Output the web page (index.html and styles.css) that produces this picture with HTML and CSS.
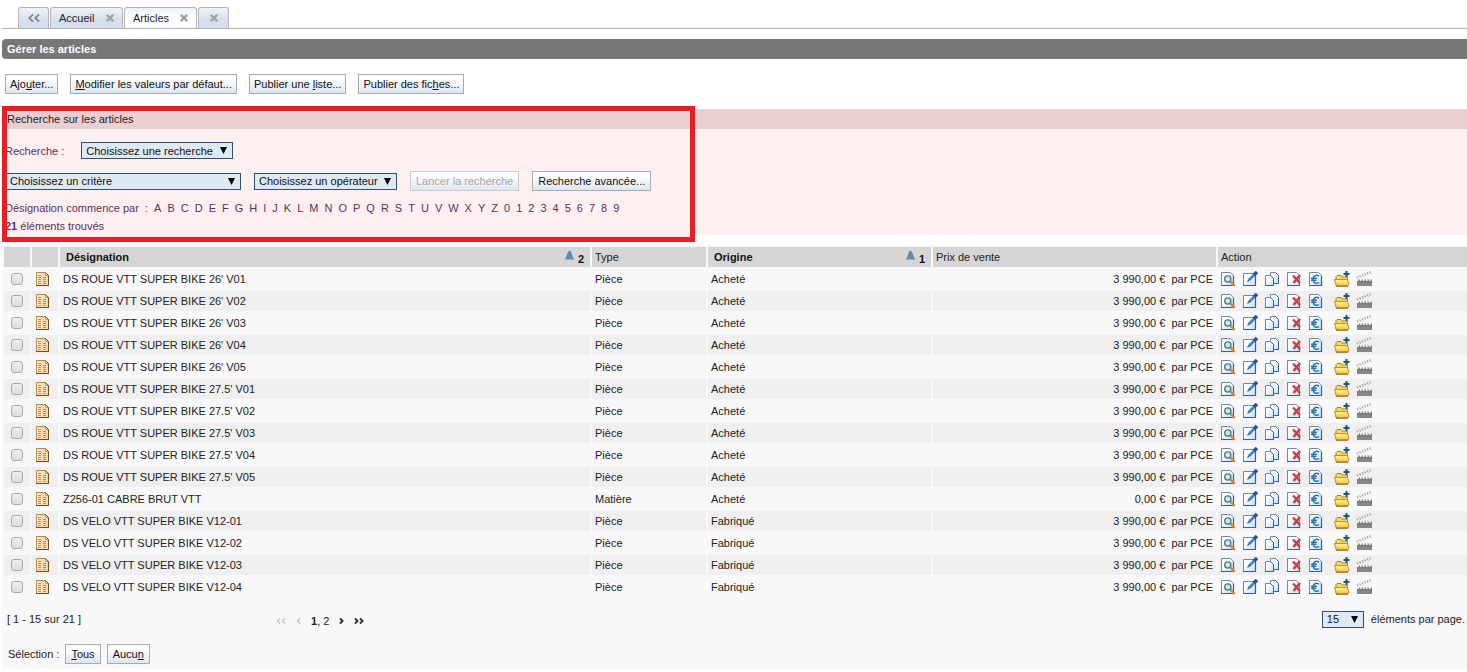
FILE: index.html
```html
<!DOCTYPE html>
<html lang="fr">
<head>
<meta charset="utf-8">
<title>Gérer les articles</title>
<link rel="stylesheet" href="styles.css">
</head>
<body>
<svg class="sprite" aria-hidden="true">
  <defs>
    <linearGradient id="paper" x1="0" y1="0" x2="1" y2="1"><stop offset="0.3" stop-color="#ffffff"/><stop offset="1" stop-color="#bfe0ee"/></linearGradient>
    <linearGradient id="gold" x1="0" y1="0" x2="0" y2="1"><stop offset="0" stop-color="#fff3a0"/><stop offset="1" stop-color="#f0c436"/></linearGradient>
    <linearGradient id="tan" x1="0" y1="0" x2="1" y2="0"><stop offset="0" stop-color="#fdeccb"/><stop offset="1" stop-color="#f3d5a2"/></linearGradient>
  </defs>
  <symbol id="i-close" viewBox="0 0 8 8"><path d="M.8 .8l6.400 6.400M7.200 .8L.8 7.200" stroke="#a2a2a2" stroke-width="2.300"/></symbol>
  <symbol id="i-prev2" viewBox="0 0 12 8"><path d="M5 .5L1.200 4 5 7.500M11 .5L7.200 4l3.800 3.500" fill="none" stroke="currentColor" stroke-width="1.500"/></symbol>
  <symbol id="i-first" viewBox="0 0 10 6"><path d="M4 .4L1.500 3 4 5.600M9 .4L6.500 3 9 5.600" fill="none" stroke="currentColor" stroke-width="1.500"/></symbol>
  <symbol id="i-prev" viewBox="0 0 5 6"><path d="M4 .4L1.500 3 4 5.600" fill="none" stroke="currentColor" stroke-width="1.500"/></symbol>
  <symbol id="i-next" viewBox="0 0 5 6"><path d="M1 .4L3.500 3 1 5.600" fill="none" stroke="currentColor" stroke-width="2"/></symbol>
  <symbol id="i-last" viewBox="0 0 10 6"><path d="M1 .4L3.500 3 1 5.600M6 .4L8.500 3 6 5.600" fill="none" stroke="currentColor" stroke-width="2"/></symbol>
  <symbol id="i-down" viewBox="0 0 7 7"><path d="M0 0h7L3.500 7z" fill="#000"/></symbol>
  <symbol id="i-sort" viewBox="0 0 9 9"><path d="M3.500 0h2L9 8.500H0z" fill="#5f8aae"/></symbol>
  <symbol id="i-article" viewBox="0 0 16 16">
    <path d="M1.500 1.500h9l3 3v10h-12z" fill="url(#tan)" stroke="#b48a50"/>
    <path d="M10.500 1.500v3h3" fill="#fff4da" stroke="#b48a50" stroke-width=".8"/>
    <path d="M1 14.500h12.500V4.500l-3-3" fill="none" stroke="#6b4e24"/>
    <path d="M3 4.500h3M3 6.500h3M3 8.500h3M3 10.500h3M3 12.500h3M8 6.500h3M8 8.500h3M8 10.500h3M8 12.500h3" stroke="#c08a5c"/>
  </symbol>
  <symbol id="i-view" viewBox="0 0 16 16">
    <path d="M1.500 1.500h9l3 3v10h-12z" fill="url(#paper)" stroke="#6f87b4"/>
    <path d="M1 14.500h12.500V5" fill="none" stroke="#3f5b94" stroke-width="1.200"/>
    <circle cx="7.800" cy="8" r="3.100" fill="#c8eef2" stroke="#4d7482" stroke-width="1.300"/>
    <path d="M10.500 10.700l4.200 4.200" stroke="#d98a2e" stroke-width="2.400"/>
  </symbol>
  <symbol id="i-edit" viewBox="0 0 16 16">
    <path d="M1.500 2.500h12v12h-12z" fill="url(#paper)" stroke="#6f87b4"/>
    <path d="M1 14.500h12.500V5" fill="none" stroke="#3f5b94" stroke-width="1.200"/>
    <path d="M7 9l6-6" stroke="#4a86c4" stroke-width="2.800"/>
    <path d="M12 4l3-3" stroke="#31508e" stroke-width="3.600"/>
    <path d="M5.500 10.500L8 8" stroke="#3c5f94" stroke-width="1.200"/>
  </symbol>
  <symbol id="i-copy" viewBox="0 0 16 16">
    <path d="M6.500 1.500h5l3 3v8h-8z" fill="url(#paper)" stroke="#6f87b4"/>
    <path d="M11.500 1.500l3 3v8h-4" fill="none" stroke="#3f5b94"/>
    <path d="M1.500 4.500h5l3 3v7h-8z" fill="url(#paper)" stroke="#6f87b4"/>
    <path d="M1 14.500h8.500v-7l-3-3" fill="none" stroke="#3f5b94"/>
  </symbol>
  <symbol id="i-delete" viewBox="0 0 16 16">
    <path d="M1.500 1.500h9l3 3v10h-12z" fill="url(#paper)" stroke="#6f87b4"/>
    <path d="M1 14.500h12.500V12" fill="none" stroke="#3f5b94" stroke-width="1.200"/>
    <path d="M7 4.500l7 7.500M14 4L7.500 12" stroke="#cc3a40" stroke-width="2.400"/>
  </symbol>
  <symbol id="i-price" viewBox="0 0 16 16">
    <path d="M1.500 1.500h9l3 3v10h-12z" fill="url(#paper)" stroke="#6f87b4"/>
    <path d="M1 14.500h12.500V5" fill="none" stroke="#3f5b94" stroke-width="1.200"/>
    <path d="M11 5C8 3.200 5 5 5 8.200s3 5.300 6 3.300M3 7.300h6M3 9.200h5.500" fill="none" stroke="#2673ae" stroke-width="1.500"/>
  </symbol>
  <symbol id="i-folder" viewBox="0 0 16 16">
    <path d="M2 14.500V5.500L3 4.500h4l1 1.500h5.500v8.500z" fill="#f4d872" stroke="#a98420"/>
    <path d="M.500 8.500h13l1.500 5-1 1.500H2.500z" fill="url(#gold)" stroke="#bd9322"/>
    <path d="M2 15.200h12" stroke="#8a6a18"/>
    <path d="M12.500 0v6M9.500 3h6" stroke="#1d5580" stroke-width="2"/>
  </symbol>
  <symbol id="i-clap" viewBox="0 0 16 16">
    <path d="M1 6.500L15 1" stroke="#a4a4a4" stroke-width="2.400" stroke-dasharray="1.200 1.500"/>
    <path d="M1 8.500h15V15H1z" fill="#868686"/>
    <path d="M1 9h14" stroke="#f4f4f4" stroke-width="2" stroke-dasharray="1.500 1.500"/>
    <path d="M1 11h15" stroke="#777"/>
  </symbol>
</svg>

<nav class="tabs" aria-label="Onglets">
  <button class="tab tab-back" type="button" aria-label="Précédent"><svg class="ico-prev2"><use href="#i-prev2"/></svg></button>
  <div class="tab"><a href="#">Accueil</a><button class="close" type="button" aria-label="Fermer Accueil"><svg><use href="#i-close"/></svg></button></div>
  <div class="tab active"><a href="#">Articles</a><button class="close" type="button" aria-label="Fermer Articles"><svg><use href="#i-close"/></svg></button></div>
  <div class="tab tab-empty"><button class="close" type="button" aria-label="Fermer"><svg><use href="#i-close"/></svg></button></div>
</nav>

<h1 class="title">Gérer les articles</h1>

<div class="toolbar">
  <button class="btn" type="button">Ajo<u>u</u>ter...</button>
  <button class="btn" type="button"><u>M</u>odifier les valeurs par défaut...</button>
  <button class="btn" type="button">Publier une <u>l</u>iste...</button>
  <button class="btn" type="button">Publier des fic<u>h</u>es...</button>
</div>

<section class="search">
  <h2>Recherche sur les articles</h2>
  <div class="search-body">
    <div class="row row-saved">
      <label for="saved">Recherche :</label>
      <span class="select saved"><select id="saved"><option>Choisissez une recherche</option></select><svg><use href="#i-down"/></svg></span>
    </div>
    <div class="row row-criteria">
      <span class="select criterion"><select aria-label="Critère"><option>Choisissez un critère</option></select><svg><use href="#i-down"/></svg></span>
      <span class="select operator"><select aria-label="Opérateur"><option>Choisissez un opérateur</option></select><svg><use href="#i-down"/></svg></span>
      <button class="btn" type="button" disabled>Lancer la recherche</button>
      <button class="btn" type="button">Recherche avancée...</button>
    </div>
    <div class="letters" id="letters"><span>Désignation commence par&nbsp; :</span></div>
    <p class="found"><b>21</b> éléments trouvés</p>
  </div>
  <div class="frame"></div>
</section>

<main class="list">
  <table>
    <colgroup><col class="c-check"><col class="c-icon"><col><col class="c-type"><col class="c-origin"><col class="c-price"><col class="c-action"></colgroup>
    <thead>
      <tr>
        <th></th><th></th>
        <th class="sorted"><div>Désignation<span class="order"><svg><use href="#i-sort"/></svg><sub>2</sub></span></div></th>
        <th>Type</th>
        <th class="sorted"><div>Origine<span class="order"><svg><use href="#i-sort"/></svg><sub>1</sub></span></div></th>
        <th>Prix de vente</th>
        <th>Action</th>
      </tr>
    </thead>
    <tbody id="rows"></tbody>
  </table>

  <div class="footer">
    <span class="range">[ 1 - 15 sur 21 ]</span>
    <nav class="pager" aria-label="Pages">
      <button type="button" disabled aria-label="Première page"><svg class="wide"><use href="#i-first"/></svg></button>
      <button type="button" disabled aria-label="Page précédente"><svg><use href="#i-prev"/></svg></button>
      <span class="pages"><b>1</b>, <a href="#">2</a></span>
      <button type="button" aria-label="Page suivante"><svg><use href="#i-next"/></svg></button>
      <button type="button" aria-label="Dernière page"><svg class="wide"><use href="#i-last"/></svg></button>
    </nav>
    <div class="per-page">
      <span class="select size"><select id="size"><option>15</option></select><svg><use href="#i-down"/></svg></span>
      <label for="size">éléments par page.</label>
    </div>
  </div>

  <div class="selection">
    <span>Sélection :</span>
    <button class="btn" type="button"><u>T</u>ous</button>
    <button class="btn" type="button">Aucu<u>n</u></button>
  </div>
</main>
<script src="app.js"></script>
</body>
</html>
```
FILE: styles.css
```css
* { box-sizing: border-box; }

body {
  margin: 0;
  padding: 7px 0 0 2px;
  background: #fff;
  color: #222;
  font: 11px/14px "Liberation Sans", Arial, sans-serif;
}

button, select, input { font: inherit; color: inherit; margin: 0; }
button { cursor: pointer; }
a { color: inherit; text-decoration: none; }
svg { display: block; }
.sprite { position: absolute; width: 0; height: 0; }

/* Tabs */
.tabs {
  display: flex;
  gap: 1px;
  padding-left: 16px;
  border-bottom: 1px solid #b4b4b4;
}
.tab {
  display: flex;
  align-items: center;
  justify-content: space-between;
  width: 73px;
  height: 21px;
  padding: 0 8px;
  border: 1px solid #b4b4b4;
  border-bottom: 0;
  border-radius: 3px 3px 0 0;
  background: linear-gradient(#eef3f9, #d6e0ec 60%);
}
.tab.active { background: linear-gradient(#eef3f9, #fff 60%); }
.tab-back, .tab-empty { width: 31px; justify-content: center; color: #777; }
.ico-prev2 { width: 12px; height: 8px; }
.close { display: block; padding: 0; border: 0; background: none; }
.close svg { width: 8px; height: 8px; }

.title {
  margin: 10px 0 0;
  padding: 3px 5px;
  border-radius: 4px 0 0 4px;
  background: #777;
  color: #fff;
  font-size: 11px;
  font-weight: bold;
}

/* Buttons */
.toolbar { display: flex; gap: 12px; padding: 15px 3px; }
.btn {
  height: 20px;
  padding: 0 5px;
  border: 1px solid #a3abb3;
  background: linear-gradient(#fff 20%, #dde6f0);
  color: #111;
  white-space: nowrap;
}
.btn:disabled { border-color: #ccc; color: #a5a5a5; }
.toolbar .btn { padding: 0 4px; }

/* Drop-downs */
.select { position: relative; display: inline-block; }
.select select {
  display: block;
  width: 100%;
  height: 17px;
  padding: 0 4px;
  border: 1px solid #2f4f74;
  border-radius: 0;
  background: #dfe9f1;
  color: #111;
  appearance: none;
}
.select svg {
  position: absolute;
  right: 6px;
  top: 5px;
  width: 7px;
  height: 7px;
  pointer-events: none;
}

/* Search panel */
.search { position: relative; background: #fef0f0; color: #5d2f5d; }
.search h2 {
  margin: 0;
  padding: 3px 5px;
  background: #eacfd0;
  color: #222;
  font-size: 11px;
  font-weight: normal;
}
.search-body { padding: 13px 3px 2px; }
.row { display: flex; align-items: center; }
.row-saved { gap: 17px; }
.row-criteria { gap: 13px; margin: 12px 0 10px; }
.saved { width: 152px; }
.criterion { width: 236px; }
.operator { width: 143px; }
.letters { display: flex; gap: 6px; margin-bottom: 4px; }
.found { margin: 0; }
.frame {
  position: absolute;
  left: 0;
  top: -3px;
  bottom: -7px;
  width: 693px;
  border: 5px solid #ec1c24;
  pointer-events: none;
}

/* Article list */
.list { margin-top: 10px; padding-bottom: 5px; background: #f8f8f8; overflow: hidden; }
table {
  width: calc(100% + 2px);
  min-width: 1000px;
  table-layout: fixed;
  border-collapse: separate;
  border-spacing: 2px;
}
.c-check, .c-icon { width: 26px; }
.c-type { width: 114px; }
.c-origin { width: 223px; }
.c-price { width: 283px; }
.c-action { width: 249px; }
th, td { height: 20px; padding: 0 3px; text-align: left; white-space: nowrap; }
th { background: #d5d5d5; font-weight: normal; }
th.sorted { padding: 0 6px; font-weight: bold; color: #111; }
th.sorted > div { display: flex; justify-content: space-between; align-items: center; }
.order { display: flex; gap: 4px; }
.order svg { width: 9px; height: 9px; margin-top: 1px; }
.order sub { height: 14px; padding-top: 2px; font-size: 11px; line-height: 14px; vertical-align: baseline; }
tbody tr:nth-child(even) td { background: #efefef; }
td.price { text-align: right; }
td input {
  display: block;
  appearance: none;
  width: 12px;
  height: 12px;
  margin: 0 auto;
  border: 1px solid #aaa;
  border-radius: 3px;
  background: linear-gradient(#eee, #ddd);
}
td svg { width: 16px; height: 16px; }
td.acts { padding-left: 2px; }
.actions { display: flex; gap: 6px; }
.actions button { padding: 0; border: 0; background: none; }
.actions .split { margin-left: 4px; }

/* Footer */
.footer {
  display: grid;
  grid-template-columns: 269px 1fr auto;
  align-items: center;
  padding: 11px 2px 0 5px;
}
.pager { display: flex; align-items: center; gap: 10px; padding-top: 4px; }
.pager button { padding: 0; border: 0; background: none; color: #333; }
.pager button:disabled { color: #c4c4c4; }
.pager svg { width: 5px; height: 6px; }
.pager svg.wide { width: 10px; }
.per-page { display: flex; align-items: center; gap: 7px; }
.size { width: 42px; }
.selection { display: flex; align-items: center; gap: 6px; padding: 16px 6px 0; }
```
FILE: app.js
```js
const articles = [
  ...["26' V01", "26' V02", "26' V03", "26' V04", "26' V05",
      "27.5' V01", "27.5' V02", "27.5' V03", "27.5' V04", "27.5' V05"]
    .map(v => ["DS ROUE VTT SUPER BIKE " + v, "Pièce", "Acheté", "3 990,00 €"]),
  ["Z256-01 CABRE BRUT VTT", "Matière", "Acheté", "0,00 €"],
  ...["01", "02", "03", "04"]
    .map(v => ["DS VELO VTT SUPER BIKE V12-" + v, "Pièce", "Fabriqué", "3 990,00 €"])
];

const actions = [
  ["view", "Consulter"], ["edit", "Modifier"], ["copy", "Dupliquer"], ["delete", "Supprimer"],
  ["price", "Tarifs"], ["folder", "Ajouter au dossier"], ["clap", "Média"]
];

const buttons = actions.map(([icon, label]) =>
  `<button type="button" aria-label="${label}"${icon === "folder" ? ' class="split"' : ""}><svg><use href="#i-${icon}"/></svg></button>`
).join("");

document.getElementById("rows").innerHTML = articles.map(([name, type, origin, price]) => `
  <tr>
    <td><input type="checkbox" aria-label="${name}"></td>
    <td class="kind"><svg><use href="#i-article"/></svg></td>
    <td>${name}</td>
    <td>${type}</td>
    <td>${origin}</td>
    <td class="price">${price}&nbsp; par PCE</td>
    <td class="acts"><div class="actions">${buttons}</div></td>
  </tr>`).join("");

document.getElementById("letters").insertAdjacentHTML("beforeend",
  [..."ABCDEFGHIJKLMNOPQRSTUVWXYZ0123456789"].map(c => `<a href="#">${c}</a>`).join(""));
```
